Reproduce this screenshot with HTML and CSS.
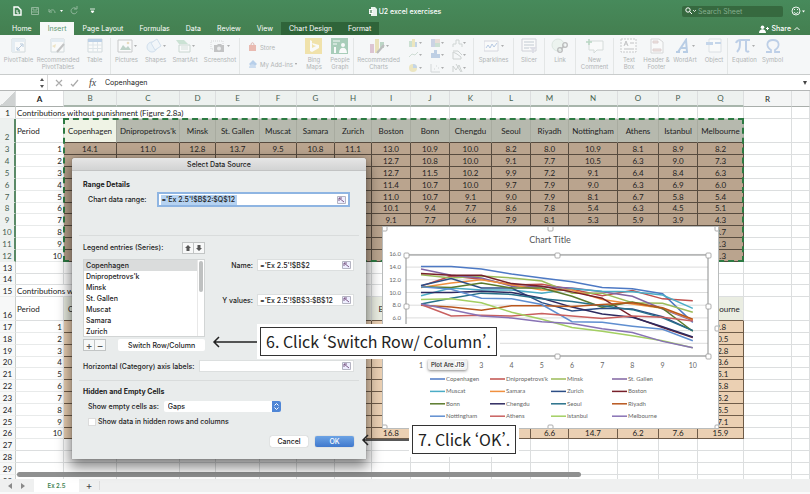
FILE: index.html
```html
<!DOCTYPE html>
<html lang="en">
<head>
<meta charset="utf-8">
<title>U2 excel exercises</title>
<link rel="stylesheet" href="styles.css">
</head>
<body>
<div class="app">
  <header class="top">
    <div class="titlebar">
      <div class="quick">
        <svg width="84" height="12" viewBox="0 0 84 12" fill="none" stroke="#fff">
          <path d="M2 2h4l3 3v5H2z" stroke-width="1.4"/><path d="M5 5v3h2"/>
          <g opacity=".4"><path d="M19.500 2.500h7v7h-7zM21 2.500v2.500h4V2.500M19.500 7h7"/><path d="M37 4v3h3M37 7c2-3 6-3 6 1"/><path d="M64 3.500a3 3 0 1 0 1 3M65 1v3h-3"/></g>
          <path d="M48 5h3l-1.500 2z" fill="#fff" stroke="none"/><path d="M78 4h5M79 6h3l-1.500 2z" fill="#fff" stroke-width=".8"/>
        </svg>
      </div>
      <h1 class="doc">
        <svg width="8" height="9" viewBox="0 0 8 9"><path d="M2 0h4l2 2v7H2z" fill="#e9f2ec"/><path d="M0 2h4v5H0z" fill="#fff"/><path d="M1 3l2 3M3 3L1 6" stroke="#3c7a4e" stroke-width=".7"/></svg>
        U2 excel exercises
      </h1>
      <div class="search-wrap">
        <label class="search">
          <svg width="11" height="8" viewBox="0 0 11 8" fill="none" stroke="#fff"><circle cx="3" cy="3" r="2.200"/><path d="M4.500 4.500L7 7"/><path d="M8 3l1.500 1.500L11 3" stroke-width=".8"/></svg>
          <input type="text" placeholder="Search Sheet" aria-label="Search Sheet">
        </label>
        <svg width="16" height="12" viewBox="0 0 16 12" fill="none" stroke="#fff"><circle cx="6" cy="6" r="4" stroke-width=".9"/><path d="M4 7c1 2 3 2 4 0M4.500 4v1M7.500 4v1" stroke-width=".9"/><path d="M12 5.500h3l-1.500 2z" fill="#fff" stroke="none"/></svg>
      </div>
    </div>
    <nav class="tabs">
      <a href="#">Home</a><a href="#" class="active">Insert</a><a href="#">Page Layout</a><a href="#">Formulas</a><a href="#">Data</a><a href="#">Review</a><a href="#">View</a><a href="#" class="ctx">Chart Design</a><a href="#" class="ctx">Format</a>
      <button class="share" type="button">
        <svg width="10" height="8" viewBox="0 0 10 8" fill="#fff"><circle cx="3.500" cy="2.200" r="1.800"/><path d="M0 8c0-5 7-5 7 0zM7 3h3v1H7zM8 2h1v3H8z"/></svg>
        Share
        <svg width="6" height="5" viewBox="0 0 6 5" fill="none" stroke="#fff"><path d="M.5 4L3 1.500 5.500 4"/></svg>
      </button>
    </nav>
  </header>

  <div class="ribbon">
    <button type="button"><svg viewBox="0 0 20 16"><path d="M3 1h13v13H3z" fill="#fff" stroke="#9fb1b5"/><path d="M3 1h13v3H3zM3 4h3v10H3z" fill="#cddcea"/><path d="M8 12l5-5M11 6h3v3M8 9v3h3" stroke="#5b86b5" fill="none"/></svg><span>PivotTable</span></button>
    <button type="button"><svg viewBox="0 0 20 16"><path d="M3 1h13v13H3z" fill="#fff" stroke="#9fb1b5"/><path d="M3 1h13v3H3z" fill="#cddcea"/><path d="M9 14l7-8" stroke="#777" stroke-width="2"/><path d="M4 8l4-2-1 4z" fill="#e5c878"/></svg><span>Recommended<br>PivotTables</span></button>
    <button type="button"><svg viewBox="0 0 20 16"><path d="M3 1h14v13H3z" fill="#fff" stroke="#9fb1b5"/><path d="M3 1h14v3H3z" fill="#6b99cf"/><path d="M3 7h14M3 10.500h14M8 4v10M12.500 4v10" stroke="#bccbd4"/></svg><span>Table</span></button>
    <button type="button" class="sep"><svg viewBox="0 0 20 16"><path d="M1 2h14v12H1z" fill="#fff" stroke="#888"/><path d="M3 12l3-5 3 3 2-2 3 4z" fill="#6d9e83"/><circle cx="11" cy="5" r="1.300" fill="#d7b56a"/><path d="M17 7h3l-1.500 2z" fill="#444"/></svg><span>Pictures</span></button>
    <button type="button"><svg viewBox="0 0 20 16"><circle cx="6" cy="9" r="5" fill="#dcebf8" stroke="#9dbddd"/><path d="M5 5l6-4 4 7-6 4z" fill="#eef5fb" stroke="#9dbddd"/><path d="M17 7h3l-1.500 2z" fill="#444"/></svg><span>Shapes</span></button>
    <button type="button"><svg viewBox="0 0 20 16"><path d="M1 2h8l4 4H4z" fill="#8fc3a0"/><path d="M4 7h11v7H4z" fill="#fff" stroke="#8aa896"/><path d="M6 9h7M6 11h7" stroke="#aabfb2"/><path d="M17 7h3l-1.500 2z" fill="#444"/></svg><span>SmartArt</span></button>
    <button type="button"><svg viewBox="0 0 20 16"><path d="M1 3h12v8H1z" fill="none" stroke="#aaa" stroke-dasharray="1 1"/><path d="M4 7h3l1-1h3l1 1h2v7H4z" fill="#777"/><circle cx="9" cy="10.500" r="2" fill="#ddd"/><path d="M17 7h3l-1.500 2z" fill="#444"/></svg><span>Screenshot</span></button>
    <div class="addins sep">
      <button type="button"><svg width="10" height="10" viewBox="0 0 10 10"><path d="M1 3h7v6H1z" fill="#d9604a"/><path d="M3 3c0-3 3-3 3 0" fill="none" stroke="#b54"/></svg>Store</button>
      <button type="button"><svg width="10" height="10" viewBox="0 0 10 10"><path d="M1 5l4-4 4 4-4 4z" fill="#5d95d6"/><path d="M1 9c0-5 7-5 7 0z" fill="#8db5e2"/></svg>My Add-ins <i></i></button>
    </div>
    <button type="button"><svg viewBox="0 0 20 16"><path d="M1 0h17v16H1z" fill="#e9c43a"/><path d="M6 2l2 1v7l4-2-3-1-1-2 7 2v3l-7 4-2-1z" fill="#fff"/></svg><span>Bing<br>Maps</span></button>
    <button type="button"><svg viewBox="0 0 20 16"><path d="M1 0h17v16H1z" fill="#37915c"/><path d="M3 3h7M3 6h4" stroke="#fff"/><circle cx="13" cy="7" r="2" fill="#fff"/><path d="M9 15c0-7 8-7 8 0zM4 9h2v6H4z" fill="#fff"/></svg><span>People<br>Graph</span></button>
    <button type="button" class="sep"><svg viewBox="0 0 20 16"><path d="M1 6h4v9H1z" fill="#b97b9b"/><path d="M6 1h4v14H6z" fill="#d8c35d"/><path d="M11 4h4v6h-4z" fill="#69a37d"/><path d="M8 15l7-8" stroke="#666" stroke-width="2"/><path d="M17 7h3l-1.500 2z" fill="#444"/></svg><span>Recommended<br>Charts</span></button>
    <div class="charts">
      <svg width="60" height="36" viewBox="0 0 60 36" fill="none">
        <path d="M1 3h3v6H1z" fill="#8fc09a"/><path d="M4 1h3v8H4z" fill="#e0cf68"/><path d="M7 4h2v5H7z" fill="#7aa4d0"/>
        <path d="M23 1h9v8h-9z" fill="#d9b7a8"/><path d="M23 1h4v8h-4z" fill="#8f9fc6"/><path d="M27 5h5v4h-5z" fill="#8fc09a"/>
        <path d="M45 9V6h3V2h3v4h3v3" stroke="#9aa6a0"/>
        <path d="M1 19l3-3 3 1 3-3" stroke="#99b7a2"/><path d="M23 15h3v5h-3zM26 12h3v8h-3zM29 16h3v4h-3z" fill="#6e94c8"/><path d="M45 21v-7l4 2 4 3v2zM45 13h5l4 4" stroke="#939c98"/>
        <circle cx="5" cy="30" r="4" fill="#dfce70"/><path d="M5 30V26a4 4 0 0 1 4 4z" fill="#7aa4d0"/><path d="M23 26v8h9M26 31h1M28 28h1M30 30h1" stroke="#a4a9ac"/><path d="M45 34v-6l3 4 3-5 3 7M48 26l5 8" stroke="#939c98"/>
        <g fill="#444"><path d="M11 4h3l-1.500 2zM33 4h3l-1.500 2zM55 4h3l-1.500 2zM11 16h3l-1.500 2zM33 16h3l-1.500 2zM55 16h3l-1.500 2zM11 29h3l-1.500 2zM33 29h3l-1.500 2zM55 29h3l-1.500 2z"/></g>
      </svg>
    </div>
    <button type="button" class="sep"><svg viewBox="0 0 20 16"><path d="M0 3h14v10H0z" fill="#fff" stroke="#aab"/><path d="M2 10l2-3 2 3 2-4 2 3 3-4" fill="none" stroke="#5b86c5"/><path d="M17 7h3l-1.500 2z" fill="#444"/></svg><span>Sparklines</span></button>
    <button type="button" class="sep"><svg viewBox="0 0 20 16"><path d="M3 1h14v12H3z" fill="#fff" stroke="#99a"/><path d="M5 4h10M5 7h10M5 10h5" stroke="#789" /><path d="M10 9h8l-3 3v3h-2v-3z" fill="#bbc"/></svg><span>Slicer</span></button>
    <button type="button" class="sep"><svg viewBox="0 0 20 16"><circle cx="8" cy="7" r="6" fill="#dfeee4" stroke="#b5cdbd"/><g fill="none" stroke="#666" stroke-width="1.300"><circle cx="10" cy="12" r="2.300"/><circle cx="15" cy="7" r="2.300"/><path d="M11 11l3-3"/></g></svg><span>Link</span></button>
    <button type="button" class="sep"><svg viewBox="0 0 20 16"><path d="M4 3h14v9h-6l-3 3v-3H4z" fill="#fff" stroke="#a9b5ae"/><path d="M4 1v6M1 4h6" stroke="#62a878" stroke-width="1.500"/></svg><span>New<br>Comment</span></button>
    <button type="button" class="sep"><svg viewBox="0 0 20 16"><path d="M2 1h15v13H2z" fill="#fff" stroke="#888" stroke-dasharray="2 1"/><path d="M5 8l2-5 2 5M6 6h2M11 5h4M5 11h10" fill="none" stroke="#777"/></svg><span>Text<br>Box</span></button>
    <button type="button"><svg viewBox="0 0 20 16"><path d="M4 1h8l4 3v11H4z" fill="#fff" stroke="#aaa"/><path d="M6 3h5v2H6zM6 11h8v2H6z" fill="#e5c4b5" stroke="#b99"/></svg><span>Header &amp;<br>Footer</span></button>
    <button type="button"><svg viewBox="0 0 20 16"><path d="M1 14h4M8 14h5M3 14L11 2l1 12M6 10h6" fill="none" stroke="#5f8fcb" stroke-width="2"/><path d="M17 7h3l-1.500 2z" fill="#444"/></svg><span>WordArt</span></button>
    <button type="button"><svg viewBox="0 0 20 16"><path d="M5 1h12v13H5z" fill="#fff" stroke="#b5c0c8"/><path d="M2 4h7v3H2zM11 4h6v2h-6z" fill="#7fa5d6"/></svg><span>Object</span></button>
    <button type="button" class="sep"><svg viewBox="0 0 20 16"><path d="M1 5c1-3 3-3 5-3h9M5 3c0 5 0 8-3 11M11 3v9c0 2 2 2 3 1" fill="none" stroke="#6c96cf" stroke-width="2"/><path d="M17 7h3l-1.500 2z" fill="#444"/></svg><span>Equation</span></button>
    <button type="button"><svg viewBox="0 0 20 16"><path d="M3 14h5v-2C2 8 4 2 10 2s8 6 2 10v2h5" fill="none" stroke="#6c96cf" stroke-width="1.800"/></svg><span>Symbol</span></button>
  </div>

  <div class="formula">
    <div class="namebox"><svg width="4" height="10" viewBox="0 0 4 10" fill="#555"><path d="M0 3h4L2 0zM0 7h4L2 10z"/></svg></div>
    <svg width="30" height="10" viewBox="0 0 30 10" fill="none" stroke="#aaa" stroke-width="1.200"><path d="M4 2l6 6M10 2L4 8M19 6l2 2 5-6"/></svg>
    <em>fx</em>
    <input type="text" value="Copenhagen" aria-label="Formula bar">
    <i></i>
  </div>

  <main class="sheet">
    <table id="grid"></table>
    <div class="hscroll"></div>
  </main>

  <footer class="bottom">
    <svg width="18" height="8" viewBox="0 0 18 8" fill="#8a8a8a"><path d="M4 1v6L0 4zM13 1v6l4-3z"/></svg>
    <button type="button" class="sheet-tab">Ex 2.5</button>
    <button type="button" class="add">+</button>
  </footer>

  <div class="ants"></div>

  <figure class="chart" id="chart"></figure>
  <div class="tip">Plot Are<b>J19</b></div>

  <form class="dialog" aria-label="Select Data Source">
    <h2>Select Data Source</h2>
    <section class="range">
      <h3>Range Details</h3>
      <div class="line">
        <label for="range">Chart data range:</label>
        <span class="field focus"><input id="range" type="text" value="='Ex 2.5'!$B$2:$Q$12"><svg class="pick" viewBox="0 0 9 8"><path d="M.5.5h8v7h-8z"/><path class="arrow" d="M2 2l5 4M2 2h3M2 2v3"/></svg></span>
      </div>
    </section>
    <section class="series">
      <div class="left">
        <div class="legend-head"><span>Legend entries (Series):</span><span class="pair"><button type="button" aria-label="Move up"><svg width="6" height="6" viewBox="0 0 8 8" fill="#555"><path d="M4 0l4 4H6v4H2V4H0z"/></svg></button><button type="button" aria-label="Move down"><svg width="6" height="6" viewBox="0 0 8 8" fill="#555"><path d="M4 8l4-4H6V0H2v4H0z"/></svg></button></span></div>
        <div class="list">
          <ul role="listbox" aria-label="Legend entries"><li class="on" role="option">Copenhagen</li><li role="option">Dnipropetrovs'k</li><li role="option">Minsk</li><li role="option">St. Gallen</li><li role="option">Muscat</li><li role="option">Samara</li><li role="option">Zurich</li></ul>
          <div class="track"></div>
        </div>
        <div class="list-tools"><span class="pair"><button type="button">+</button><button type="button">−</button></span><button type="button" class="switch">Switch Row/Column</button></div>
      </div>
      <div class="right">
        <label for="name">Name:</label>
        <span class="field"><input id="name" type="text" value="='Ex 2.5'!$B$2"><svg class="pick" viewBox="0 0 9 8"><path d="M.5.5h8v7h-8z"/><path class="arrow" d="M2 2l5 4M2 2h3M2 2v3"/></svg></span>
        <label for="yval">Y values:</label>
        <span class="field"><input id="yval" type="text" value="='Ex 2.5'!$B$3:$B$12"><svg class="pick" viewBox="0 0 9 8"><path d="M.5.5h8v7h-8z"/><path class="arrow" d="M2 2l5 4M2 2h3M2 2v3"/></svg></span>
      </div>
      <div class="axis">
        <label for="axis">Horizontal (Category) axis labels:</label>
        <span class="field"><input id="axis" type="text"><svg class="pick" viewBox="0 0 9 8"><path d="M.5.5h8v7h-8z"/><path class="arrow" d="M2 2l5 4M2 2h3M2 2v3"/></svg></span>
      </div>
    </section>
    <section class="hidden-cells">
      <h3>Hidden and Empty Cells</h3>
      <div class="line">
        <label for="gaps">Show empty cells as:</label>
        <span class="drop"><select id="gaps"><option>Gaps</option><option>Zero</option></select><svg width="9" height="11" viewBox="0 0 9 11" fill="none" stroke="#fff"><path d="M2.500 4.500l2-2 2 2M2.500 6.500l2 2 2-2"/></svg></span>
      </div>
      <label class="check"><input type="checkbox">Show data in hidden rows and columns</label>
    </section>
    <div class="actions"><button type="button">Cancel</button><button type="button" class="ok">OK</button></div>
  </form>

  <div class="note note-switch"><svg width="48" height="14" viewBox="0 0 48 14"><path d="M2 7h46M7 2L2 7l5 5"/></svg><p>6. Click ‘Switch Row/ Column’.</p></div>
  <div class="note note-ok"><svg width="51" height="14" viewBox="0 0 51 14"><path d="M2 7h49M7 2L2 7l5 5"/></svg><p>7. Click ‘OK’.</p></div>
</div>
<script src="app.js"></script>
</body>
</html>
```

FILE: styles.css
```css
* { box-sizing: border-box; }
body { margin: 0; font-family: Inter, "Liberation Sans", sans-serif; font-size: 7px; line-height: 9px; color: #222; }
button, input, select { font: inherit; color: inherit; margin: 0; padding: 0; border: 0; background: none; }
input { min-width: 0; outline: none; }
h1, h2, h3, p, ul, figure { margin: 0; padding: 0; font-size: inherit; }
svg { display: block; flex: none; }
a { color: inherit; text-decoration: none; }

.app { position: relative; display: flex; flex-direction: column; height: 100vh; min-height: 494px; overflow: hidden; background: #fff; }

.top { background: linear-gradient(#478a5b, #447f50); color: #fff; height: 35px; flex: none; }
.titlebar { display: grid; grid-template-columns: 1fr auto 1fr; align-items: center; height: 22px; padding: 0 4px 0 12px; }
.quick { margin-right: 8px; }
.doc { display: flex; align-items: center; gap: 2px; margin-right: 8px; font-weight: 500; }
.search-wrap { display: flex; justify-content: flex-end; align-items: center; gap: 7px; }
.search { display: flex; align-items: center; gap: 2px; width: 101px; height: 11px; padding: 0 3px; background: #36693f; border-radius: 2px; }
.search input { flex: 1; }
.search input::placeholder { color: #84ad8d; opacity: 1; }
.tabs { display: flex; height: 13px; padding-left: 4px; line-height: 13px; }
.tabs a { padding: 0 8px; }
.tabs .active { background: #f6f8f8; color: #5b9570; }
.tabs .ctx { background: #2f6439; }
.share { margin-left: auto; margin-right: 10px; display: flex; align-items: center; gap: 3px; font-weight: 500; }

.ribbon {
  display: grid; flex: none; height: 40px; padding: 3px 0 2px; background: #f5f7f8; border-bottom: 1px solid #c9cccc;
  grid-template-columns: 37px 42px 31px 32px 27px 32px 38px 62px 26px 26px 50px 70px 40px 31px 31px 38px 31px 25px 32px 26px 34px 23px;
  font-size: 6px; line-height: 7px; color: #b1b5b6;
}
.ribbon > button { display: flex; flex-direction: column; align-items: center; gap: 2px; white-space: nowrap; min-width: 0; }
.ribbon > button svg { width: 20px; height: 16px; }
.ribbon svg { opacity: .4; }
.ribbon .sep { border-left: 1px solid #e3e6e6; }
.addins { display: flex; flex-direction: column; gap: 7px; padding: 4px 0 0 8px; white-space: nowrap; }
.addins button { display: flex; align-items: center; gap: 2px; }
.addins i { border: 1px solid transparent; border-top: 2px solid #999; }
.charts { padding-left: 5px; }

.formula { display: flex; align-items: center; flex: none; height: 16px; border-bottom: 1px solid #b4b6b6; background: #fff; padding-right: 3px; }
.namebox { width: 48px; height: 15px; padding: 3px 3px 0 0; display: flex; justify-content: flex-end; border-right: 1px solid #d8d8d8; }
.formula > svg { margin-left: 4px; }
.formula em { width: 8px; margin: 0 8px 0 7px; font-family: "Liberation Serif", serif; font-size: 10px; color: #444; }
.formula input { flex: 1; height: 14px; }
.formula i { border: 2px solid transparent; border-top: 4px solid #444; border-bottom: 0; }

.sheet { position: relative; flex: 1; min-height: 0; overflow: hidden; font-family: Lato, sans-serif; font-size: 8px; line-height: 10px; }
.sheet table { width: 100%; table-layout: fixed; border-collapse: separate; border-spacing: 0; }
.sheet th, .sheet td { padding: 1px 0 0; height: 12px; border-right: 1px solid #dcdedf; border-bottom: 1px solid #dcdedf; text-align: center; font-weight: 400; white-space: nowrap; overflow: hidden; line-height: 9px; }
.sheet tr.trim > * { height: 11px; }
.sheet thead th { height: 16px; background: #f4f5f5; border-bottom-color: #a9aeab; }
.sheet thead th.picked { background: #edf1ef; color: #47604f; border-bottom: 2px solid #a7b5ab; }
.sheet thead th.own { font-weight: 700; background: #fff; }
.sheet thead th.corner { background: linear-gradient(135deg, #f4f5f5 50%, #cfd2d2 50%); }
.sheet tbody th { background: #f7f8f8; border-right-color: #cbd0cd; border-bottom-color: #eceeed; }
.sheet tbody th.picked { background: #edf1ef; color: #47604f; border-right: 2px solid #5a8a67; }
.sheet tr.first > * { height: 12px; }
.sheet tr.head > * { height: 24px; }
.sheet tr.head2 > * { height: 24px; }
.sheet tr.head th, .sheet tr.head2 th { vertical-align: bottom; }
.sheet td.label { text-align: left; padding-left: 1px; }
.sheet td.title { overflow: visible; }
.sheet td.period { text-align: right; padding-right: 1px; border-color: #e8eaea; }
.sheet .head td.city { background: #b6b9ae; border-color: #a8aba0; border-bottom-color: #574b3f; }
.sheet .head td.anchor { background: #eff3e5; }
.sheet .head2 td.city { background: #eaede2; border-bottom-color: #6f5c49; }
.sheet td.dark { background: #baa48e; border-color: #574b3f; }
.sheet td.light { background: #ebd0b3; border-color: #6f5c49; }
.hscroll { position: absolute; left: 17px; bottom: 2px; width: 564px; height: 5px; border-radius: 3px; background: #8f9090; }

.bottom { display: flex; align-items: center; flex: none; height: 15px; background: #eff0f0; padding-left: 8px; border-bottom: 2px solid #fafafa; }
.sheet-tab { width: 45px; height: 13px; margin-left: 8px; background: #fff; color: #3f8553; font-weight: 600; font-size: 6px; }
.add { width: 21px; font-size: 10px; border-right: 1px solid #ddd; color: #444; }

.ants { position: absolute; left: 63px; top: 118px; width: 681px; height: 144px; border: 2px dashed #2d7a43; }

.chart { position: absolute; left: 382px; top: 226px; width: 337px; height: 203px; background: #fff; border: 1px solid #b9bcbc; }
.chart text { font-family: Lato, sans-serif; font-size: 6px; fill: #666; }
.chart .heading { font-size: 9px; fill: #555; text-anchor: middle; }
.chart .tick { font-size: 7px; text-anchor: middle; }
.chart .value { font-size: 6px; text-anchor: end; }
.tip { position: absolute; left: 428px; top: 359px; height: 11px; padding: 1px 3px; background: #f1f1f1; border-radius: 2px; box-shadow: 0 1px 3px #888; font-size: 6px; font-weight: 500; color: #222; }
.tip b { font-weight: 500; background: #fff; margin-left: 1px; }

.dialog { position: absolute; left: 72px; top: 158px; width: 294px; height: 301px; background: #e9ecec; border-radius: 3px 3px 0 0; box-shadow: 0 0 1px #555, 0 6px 14px 2px rgba(0, 0, 0, .5); font-weight: 500; }
.dialog h2 { height: 13px; line-height: 13px; text-align: center; font-weight: 500; background: linear-gradient(#e6e6e6, #d2d3d3); border-bottom: 1px solid #c2c3c3; border-radius: 3px 3px 0 0; }
.dialog h3 { font-weight: 700; }
.dialog section { margin: 0 7px; padding: 0 4px; border-bottom: 1px solid #d9dcdc; }
.dialog .range { height: 65px; padding-top: 9px; }
.range h3 { margin-bottom: 4px; }
.line { display: flex; align-items: center; padding-left: 5px; }
.field { display: flex; align-items: center; height: 12px; background: #fff; border: 1px solid #dcdfdf; padding: 0 2px; }
.field input { flex: 1; width: 10px; height: 10px; }
.range .field { flex: 0 0 191px; margin-left: 12px; height: 13px; outline: 1px solid #8fb5e2; border-color: #8fb5e2; }
.range .field input { flex: 0 0 76px; background: #b5d2f1; margin-right: auto; }
.pick { width: 9px; height: 8px; fill: #eef; stroke: #b4b4c2; }
.pick .arrow { fill: none; stroke: #7d5a86; }
.series { display: grid; grid-template-columns: 122px 1fr; height: 145px; align-content: start; }
.legend-head { display: flex; align-items: center; justify-content: space-between; height: 23px; }
.pair { display: flex; }
.pair button { width: 12px; height: 12px; display: grid; place-items: center; background: #f7f8f8; border: 1px solid #c2c5c5; margin-left: -1px; font-size: 10px; line-height: 8px; color: #555; }
.pair button:first-child { margin-left: 0; }
.list { display: flex; height: 78px; background: #fff; border: 1px solid #d2d5d5; }
.list ul { flex: 1; list-style: none; }
.list li { height: 11px; line-height: 11px; padding-left: 2px; }
.list .on { background: #dadcdc; }
.track { width: 7px; padding: 1px; border-left: 1px solid #e8e8e8; }
.track::before { content: ""; display: block; width: 4px; height: 31px; border-radius: 2px; background: #bfc1c1; }
.list-tools { display: flex; justify-content: space-between; margin-top: 2px; }
.switch { width: 87px; height: 12px; background: #fff; border-radius: 2px; }
.right { display: grid; grid-template-columns: 1fr 97px; column-gap: 4px; row-gap: 23px; align-content: start; align-items: center; justify-items: end; padding: 23px 1px 0 0; }
.right .field { width: 97px; }
.axis { grid-column: 1 / -1; display: flex; align-items: center; gap: 5px; margin-top: 9px; padding-right: 1px; }
.axis .field { flex: 1; }
.dialog .hidden-cells { padding-top: 6px; border: 0; }
.hidden-cells h3 { margin-bottom: 5px; }
.drop { display: flex; width: 117px; height: 11px; margin-left: 5px; background: #fff; border-radius: 2px; overflow: hidden; }
.drop select { flex: 1; padding-left: 4px; appearance: none; }
.drop svg { background: #4f86d6; }
.check { display: flex; align-items: center; gap: 2px; margin: 5px 0 0 5px; }
.check input { appearance: none; width: 8px; height: 8px; background: #fff; border: 1px solid #dcdcdc; }
.actions { display: flex; justify-content: flex-end; gap: 7px; padding: 10px 12px 0 0; }
.actions button { width: 38px; height: 11px; background: #fff; border-radius: 2px; box-shadow: 0 0 1px #999; }
.actions .ok { width: 39px; color: #fff; background: linear-gradient(#6ca3e4, #3f78cd); }

.note { position: absolute; display: flex; align-items: center; white-space: nowrap; }
.note svg { fill: none; stroke: #222; stroke-width: 1.500; }
.note p { padding: 0 5px; height: 29px; line-height: 26px; background: #fff; border: 1px solid #333; box-shadow: 0 0 0 3px #fff; font-family: "Noto Sans CJK SC", "Open Sans", sans-serif; font-weight: 400; font-size: 16px; font-feature-settings: "pwid"; color: #222; }
.note-switch { left: 212px; top: 327px; z-index: 2; }
.note-ok { left: 361px; top: 425px; }
```

FILE: app.js
```js
const cities = ["Copenhagen", "Dnipropetrovs'k", "Minsk", "St. Gallen", "Muscat", "Samara", "Zurich", "Boston", "Bonn", "Chengdu", "Seoul", "Riyadh", "Nottingham", "Athens", "Istanbul", "Melbourne"];
const colors = ["#4d79c4", "#c0504d", "#9bbb59", "#8064a2", "#4bacc6", "#f0903f", "#2c4d85", "#77202a", "#5a7a2c", "#2e2a60", "#27708a", "#b8561d", "#5f8ed0", "#c9605f", "#a3cf62", "#8872b5"];
const contributions = [
  [14.1, 14.1, 13.7, 12.9, 12.3, 11.7, 10.8, 10.6, 9.8, 5.3],
  [11.0, 12.6, 12.1, 11.2, 11.3, 10.5, 9.5, 10.3, 9.0, 8.7],
  [12.8, 12.3, 12.6, 12.3, 11.8, 9.9, 9.9, 8.4, 8.3, 6.9],
  [13.7, 12.7, 12.3, 11.0, 10.9, 10.7, 10.1, 9.4, 7.4, 5.6],
  [9.5, 10.7, 10.4, 10.4, 9.9, 10.6, 10.2, 10.1, 9.6, 7.5],
  [10.8, 11.5, 12.0, 11.2, 10.4, 10.4, 8.9, 8.2, 7.5, 5.7],
  [11.1, 12.2, 10.7, 10.7, 8.4, 7.1, 7.5, 7.4, 6.2, 4.0],
  [13.0, 12.7, 12.7, 11.4, 11.0, 10.1, 9.1, 6.2, 4.5, 2.9],
  [10.9, 10.8, 11.5, 10.7, 10.7, 9.4, 7.7, 8.5, 7.5, 3.9],
  [10.0, 10.0, 10.2, 10.0, 9.1, 7.7, 6.6, 6.1, 4.6, 3.0],
  [8.2, 9.1, 9.9, 9.7, 9.0, 8.6, 7.9, 7.3, 6.0, 4.0],
  [8.0, 7.7, 7.2, 7.9, 7.9, 7.8, 8.1, 8.4, 7.6, 5.8],
  [10.9, 10.5, 9.1, 9.0, 8.1, 5.4, 5.3, 4.7, 4.2, 2.4],
  [8.1, 6.3, 6.4, 6.3, 6.7, 6.3, 5.9, 6.3, 6.1, 5.5],
  [8.9, 9.0, 8.4, 6.9, 5.8, 4.5, 3.9, 3.2, 2.4, 1.3],
  [8.2, 7.3, 6.3, 6.0, 5.4, 5.1, 4.3, 3.7, 2.3, 1.3]
];
const melbourne2 = ["9.8", "10.5", "12.8", "13.6", "15.1", "15.8", "15.2", "15.5", "17.1", "15.9"];
const lastRow2 = { 7: "16.8", 11: "6.6", 12: "14.7", 13: "6.2", 14: "7.6" };

const widths = [16, 48, 53, 63, 36, 44, 37, 38, 37, 39, 39, 42, 39, 38, 49, 41, 39, 46, 48];
let html = "<colgroup>" + widths.map(w => `<col style="width:${w}px">`).join("") + "<col></colgroup><thead><tr><th class='corner'></th>";
"ABCDEFGHIJKLMNOPQR ".split("").forEach((l, i) => {
  html += `<th class="${i === 0 ? "own" : i < 17 ? "picked" : ""}">${l}</th>`;
});
html += "</tr></thead><tbody>";

for (let r = 1; r <= 30; r++) {
  const kind = r === 1 ? "first" : r === 2 ? "head" : r === 16 ? "head2" : r % 6 === 2 ? "trim" : "";
  html += `<tr class="${kind}"><th class="${r > 1 && r < 13 ? "picked" : ""}">${r}</th>`;
  if (r === 1 || r === 15) {
    const span = r === 1 ? 4 : 2;
    html += `<td class="label title" colspan="${span}">Contributions with${r === 1 ? "out" : ""} punishment${r === 1 ? " (Figure 2.8a)" : ""}</td>` + "<td></td>".repeat(19 - span);
  } else if (r === 2 || r === 16) {
    html += "<td class='label'>Period</td>" + cities.map((c, i) => `<td class="city${i ? "" : " anchor"}">${c}</td>`).join("") + "<td></td><td></td>";
  } else if (r < 13) {
    html += `<td class="period">${r - 2}</td>` + contributions.map(c => `<td class="dark">${c[r - 3].toFixed(1)}</td>`).join("") + "<td></td><td></td>";
  } else if (r > 16 && r < 27) {
    html += `<td class="period">${r - 16}</td>` + cities.map((c, i) => `<td class="light">${i === 15 ? melbourne2[r - 17] : r === 26 ? lastRow2[i] || "" : ""}</td>`).join("") + "<td></td><td></td>";
  } else {
    html += "<td></td>".repeat(19);
  }
  html += "</tr>";
}
document.getElementById("grid").innerHTML = html + "</tbody>";

const px = i => 38 + i * 30.2;
const py = v => 129 - v * 6.35;
let s = `<svg width="335" height="201" viewBox="0 0 335 201" fill="none"><text class="heading" x="167" y="16">Chart Title</text>`;
for (let v = 0; v <= 16; v += 2) {
  s += `<path d="M23 ${py(v)}H325" stroke="#dcdcdc"/>`;
  if (v > 4) s += `<text class="value" x="18" y="${py(v) + 2}">${v}.0</text>`;
}
for (let i = 0; i < 10; i++) if (i !== 1) s += `<text class="tick" x="${px(i)}" y="141">${i + 1}</text>`;
contributions.forEach((c, k) => {
  s += `<polyline points="${c.map((v, i) => px(i) + "," + py(v)).join(" ")}" stroke="${colors[k]}" stroke-width="1.5"/>`;
});
s += `<path d="M23 28H325V129H23z" stroke="#8c8e8e"/>`;
[[23, 28], [174, 28], [325, 28], [23, 79], [325, 79], [174, 129], [325, 129], [1, 1], [167, 1], [334, 1], [334, 101], [1, 200], [167, 200], [334, 200]].forEach(([x, y]) => {
  s += `<rect x="${x - 2}" y="${y - 2}" width="5" height="5" rx="1" fill="#fff" stroke="#999" stroke-width=".8"/>`;
});
const lx = [47, 107, 168, 229];
cities.forEach((c, i) => {
  const x = lx[i % 4], y = 152 + Math.floor(i / 4) * 12.4;
  s += `<path d="M${x} ${y}h15" stroke="${colors[i]}" stroke-width="1.5"/><text x="${x + 16}" y="${y + 2}">${c}</text>`;
});
document.getElementById("chart").innerHTML = s + "</svg>";
```
